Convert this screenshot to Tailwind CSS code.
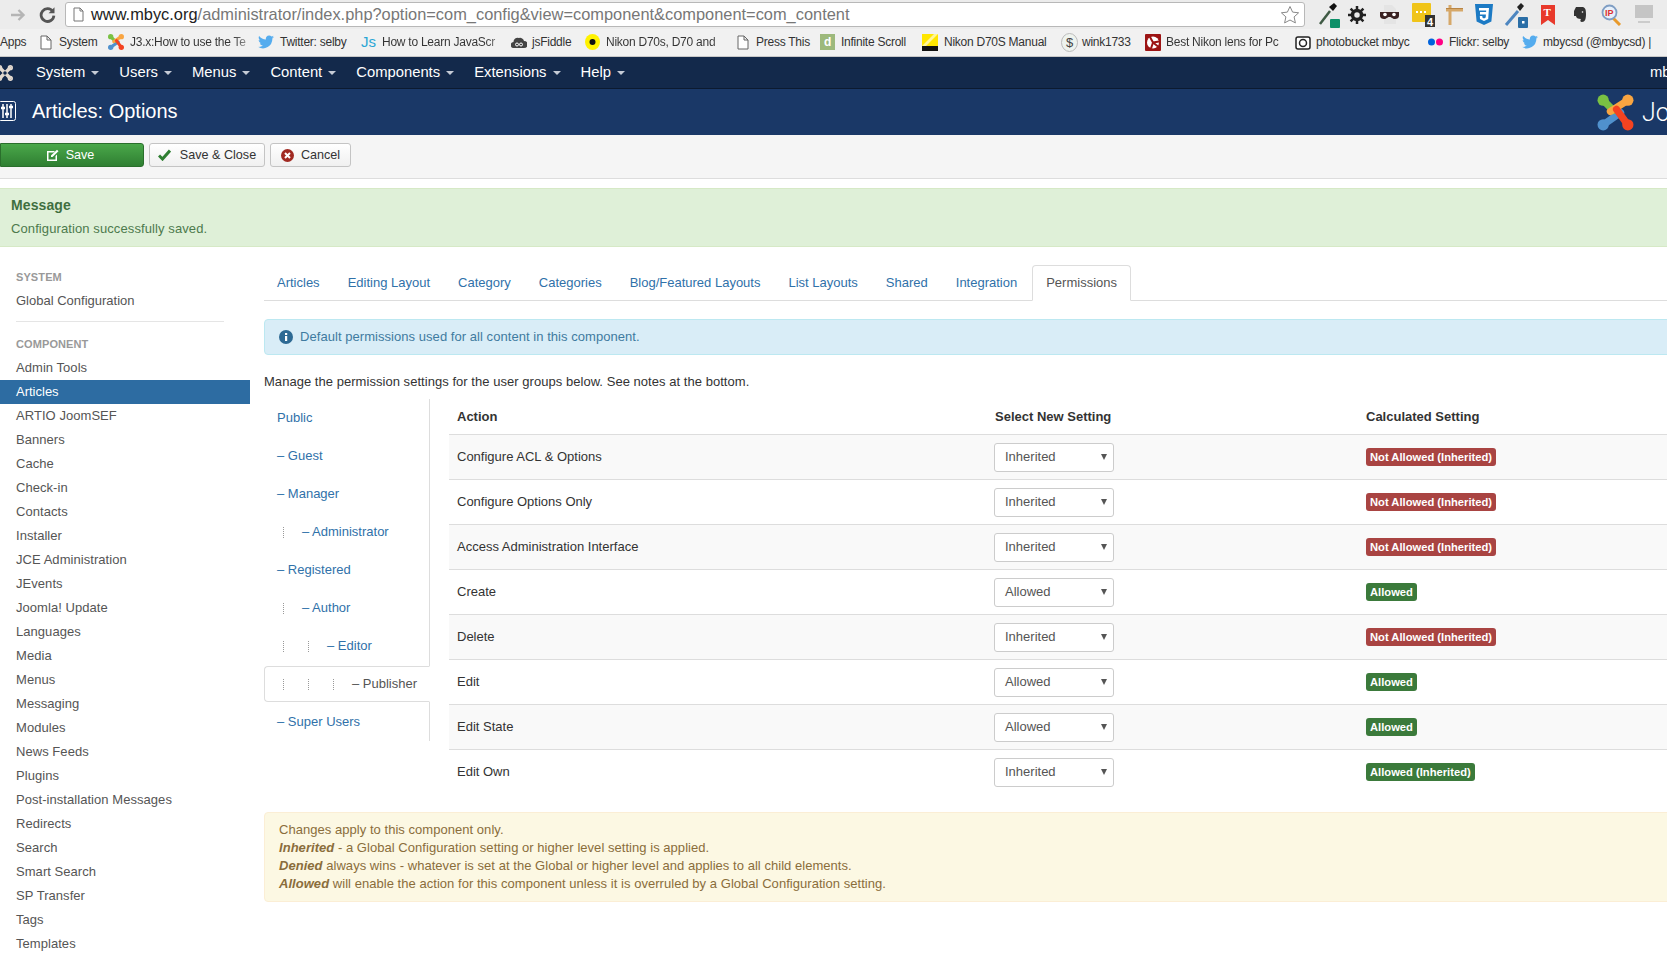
<!DOCTYPE html>
<html lang="en">
<head>
  <meta charset="UTF-8">
  <title>Articles: Options</title>
  <script src="https://cdn.jsdelivr.net/npm/@tailwindcss/browser@4"></script>
</head>
<body class="w-[1667px] h-[960px] overflow-hidden bg-white text-[13px] text-[#333] font-['Liberation_Sans',Arial,sans-serif]">

  <!-- browser toolbar -->
  <div class="h-[29px] flex items-center bg-[#ececec]">
    <svg class="ml-[10px] w-[16px] h-[16px] text-[#b5b5b5]" viewBox="0 0 16 16" fill="none" stroke="currentColor" stroke-width="2.4"><path d="M1 8h12M8.5 3l5 5-5 5"/></svg>
    <svg class="ml-[13px] w-[17px] h-[17px] text-[#555]" viewBox="0 0 16 16" fill="none" stroke="currentColor" stroke-width="2.6"><path d="M13 5.2A6 6 0 1 0 14 9"/><path d="M14.6 1.2v5.6H9z" fill="currentColor" stroke="none"/></svg>
    <div class="ml-[9px] w-[1240px] h-[25px] bg-white border border-[#b8b8b8] rounded-[3px] flex items-center pl-[6px] pr-[4px]">
      <svg class="w-[13px] h-[15px] text-[#777]" viewBox="0 0 13 15" fill="#fff" stroke="currentColor"><path d="M2 1h6l3 3v10H2zM8 1v3h3"/></svg>
      <span class="ml-[6px] text-[16.4px] whitespace-nowrap text-[#222]">www.mbyc.org<span class="text-[#777]">/administrator/index.php?option=com_config&amp;view=component&amp;component=com_content</span></span>
      <svg class="ml-auto w-[20px] h-[20px] text-[#888]" viewBox="0 0 20 20" fill="#fff" stroke="currentColor"><path d="M10 1.5l2.6 5.6 6 .7-4.500 4.100 1.300 6L10 15l-5.400 2.900 1.300-6L1.400 7.800l6-.7z"/></svg>
    </div>
    <svg class="ml-[13px] w-[22px] h-[26px]" viewBox="0 0 22 26"><path d="M2 22L12 9" stroke="#3f5a44" stroke-width="2.500"/><path d="M11 5l5-4 3 3-4 5z" fill="#111"/><rect x="12" y="17" width="10" height="9" rx="1" fill="#0d9068"/></svg>
    <svg class="ml-[8px] w-[18px] h-[18px]" viewBox="0 0 18 18"><circle cx="9" cy="9" r="4.500" fill="none" stroke="#222" stroke-width="3.500"/><path d="M9 0v4M9 14v4M0 9h4M14 9h4M2.600 2.600l3 3M12.400 12.400l3 3M15.400 2.600l-3 3M5.600 12.400l-3 3" stroke="#222" stroke-width="2.500"/></svg>
    <svg class="ml-[14px] w-[19px] h-[22px]" viewBox="0 0 19 22"><path d="M4 1h8l4 4v15H4z" fill="#e4e4e4"/><path d="M0 8h19v4c0 2-2 3-4 3-3 0-3-2-5.500-2S7 15 4 15c-2 0-4-1-4-3z" fill="#3a2222"/><circle cx="5" cy="10.500" r="1.800" fill="#fff"/><circle cx="14" cy="10.500" r="1.800" fill="#fff"/></svg>
    <svg class="ml-[13px] w-[24px] h-[25px]" viewBox="0 0 24 25"><rect width="19" height="19" rx="1" y="1" fill="#f0c419"/><path d="M4 10h2M8 10h2M12 10h2" stroke="#fff" stroke-width="2"/><rect x="13" y="13" width="10" height="12" fill="#333"/><text x="15" y="23.500" font-size="11" font-weight="bold" fill="#fff">4</text></svg>
    <svg class="ml-[9px] w-[18px] h-[21px]" viewBox="0 0 18 21"><path d="M5 1v20M1 6h17" stroke="#d6a869" stroke-width="3"/><path d="M1 4.500h17" stroke="#b98544"/></svg>
    <svg class="ml-[12px] w-[18px] h-[21px]" viewBox="0 0 18 21"><path d="M0 0h18l-1.600 17.500L9 21l-7.400-3.500z" fill="#1c7ac4"/><path d="M4 4h10l-.8 11L9 17l-4-2-.2-3h2.500l.1 1.500L9 14.500l1.700-1 .2-3H5V8h6.100l.1-1.500H4z" fill="#fff"/></svg>
    <svg class="ml-[11px] w-[24px] h-[26px]" viewBox="0 0 24 26"><path d="M2 23L14 9" stroke="#4d86c0" stroke-width="3"/><path d="M13 5l4-4 3 3-4 5z" fill="#222"/><rect x="14" y="15" width="10" height="11" rx="1" fill="#2a6ea6"/><rect x="18" y="19" width="2.500" height="2.500" fill="#fff"/></svg>
    <svg class="ml-[13px] w-[14px] h-[20px]" viewBox="0 0 14 20"><path d="M0 0h14v20l-7-5-7 5z" fill="#e8392b"/><text x="2.500" y="11" font-size="11" font-weight="bold" fill="#fff" font-family="Liberation Serif">T</text></svg>
    <svg class="ml-[18px] w-[14px] h-[17px]" viewBox="0 0 14 17"><path d="M3 1h6c3 0 4 2 4 7 0 5-1 8-4 8-2 0-2-2-1-3-3 0-5-1-5-3H1V5z" fill="#333"/><circle cx="9.500" cy="6" r=".8" fill="#fff"/></svg>
    <svg class="ml-[14px] w-[21px] h-[22px]" viewBox="0 0 21 22"><path d="M12 14l7 7" stroke="#e89a2c" stroke-width="3"/><circle cx="8.500" cy="8.500" r="7" fill="#e8f0fa" stroke="#7f9ec4" stroke-width="1.800"/><text x="4" y="12" font-size="9" font-weight="bold" fill="#d33">IP</text></svg>
    <svg class="ml-[13px] w-[18px] h-[19px]" viewBox="0 0 18 19"><rect width="18" height="13" fill="#c5c5c5"/><path d="M3 17h12" stroke="#ccc" stroke-width="2"/></svg>
  </div>

  <!-- bookmarks bar -->
  <div class="h-[28px] pb-[1px] flex items-center bg-[#f1f1f1] border-b border-[#c8c8c8] text-[12px] text-[#333] whitespace-nowrap overflow-hidden tracking-[-0.25px]">
    <span class="w-[40px] shrink-0">Apps</span>
    <svg class="w-[12px] h-[15px] shrink-0 text-[#666]" viewBox="0 0 12 15" fill="#fff" stroke="currentColor"><path d="M1 1h6l4 4v9H1zM7 1v4h4"/></svg>
    <span class="ml-[7px] w-[49px] shrink-0">System</span>
    <svg class="w-[16px] h-[18px] shrink-0" viewBox="0 0 36 36" fill="none" stroke-width="7" stroke-linecap="round"><path d="M6 30L23 18" stroke="#5091cd"/><path d="M6 6l10 10" stroke="#7ac143"/><path d="M30 6L13 17" stroke="#f9a541"/><path d="M30 30L19 15" stroke="#f44321"/><circle cx="6" cy="6" r="6" fill="#7ac143"/><circle cx="30" cy="6" r="6" fill="#f9a541"/><circle cx="30" cy="30" r="6" fill="#f44321"/><circle cx="6" cy="30" r="6" fill="#5091cd"/></svg>
    <span class="ml-[6px] w-[128px] shrink-0 overflow-hidden text-transparent bg-clip-text bg-gradient-to-r from-[#333] from-80% to-[#f1f1f1]">J3.x:How to use the Te</span>
    <svg class="w-[16px] h-[14px] shrink-0" viewBox="0 0 24 20"><path d="M24 2.500c-.9.400-1.800.7-2.800.8 1-.6 1.800-1.500 2.200-2.700-1 .6-2 1-3.100 1.200A4.900 4.900 0 0 0 11.900 6.200C7.800 6 4.200 4 1.700.9c-1.300 2.200-.7 5.100 1.500 6.600-.8 0-1.600-.2-2.200-.6 0 2.300 1.600 4.400 4 4.900-.7.200-1.500.2-2.200.1.600 2 2.400 3.400 4.600 3.400A9.900 9.900 0 0 1 0 17.300 14 14 0 0 0 21.500 4.900c1-.7 1.800-1.500 2.500-2.400z" fill="#55acee"/></svg>
    <span class="ml-[6px] w-[81px] shrink-0">Twitter: selby</span>
    <span class="w-[15px] shrink-0 text-[15px] text-[#2aa6d5] tracking-normal">Js</span>
    <span class="ml-[6px] w-[129px] shrink-0 overflow-hidden text-transparent bg-clip-text bg-gradient-to-r from-[#333] from-80% to-[#f1f1f1]">How to Learn JavaScr</span>
    <svg class="w-[16px] h-[13px] shrink-0" viewBox="0 0 16 13"><path d="M3 12a3 3 0 0 1-.5-6A4 4 0 0 1 8 2a4 4 0 0 1 5 3 3.500 3.500 0 0 1 0 7z" fill="#444"/><circle cx="6" cy="8.500" r="1.500" fill="none" stroke="#fff"/><circle cx="10" cy="8.500" r="1.500" fill="none" stroke="#fff"/></svg>
    <span class="ml-[5px] w-[53px] shrink-0">jsFiddle</span>
    <svg class="w-[15px] h-[16px] shrink-0" viewBox="0 0 15 16"><ellipse cx="7.500" cy="8" rx="7.500" ry="8" fill="#fff200"/><circle cx="7.500" cy="8" r="3" fill="#111"/></svg>
    <span class="ml-[6px] w-[131px] shrink-0 overflow-hidden text-transparent bg-clip-text bg-gradient-to-r from-[#333] from-80% to-[#f1f1f1]">Nikon D70s, D70 and</span>
    <svg class="w-[12px] h-[15px] shrink-0 text-[#666]" viewBox="0 0 12 15" fill="#fff" stroke="currentColor"><path d="M1 1h6l4 4v9H1zM7 1v4h4"/></svg>
    <span class="ml-[7px] w-[64px] shrink-0">Press This</span>
    <span class="w-[15px] h-[16px] shrink-0 bg-[#9db97c] text-white text-[12px] font-bold text-center leading-[16px]">d</span>
    <span class="ml-[6px] w-[81px] shrink-0">Infinite Scroll</span>
    <svg class="w-[16px] h-[17px] shrink-0" viewBox="0 0 16 17"><rect width="16" height="17" fill="#ffe600"/><path d="M0 12L12 0h4L0 16z" fill="#fff59a"/><rect y="12" width="16" height="5" fill="#111"/></svg>
    <span class="ml-[6px] w-[117px] shrink-0">Nikon D70S Manual</span>
    <svg class="w-[17px] h-[19px] shrink-0" viewBox="0 0 17 19"><ellipse cx="8.500" cy="9.500" rx="8" ry="9" fill="#eef3ee" stroke="#bbb"/><text x="5" y="14" font-size="13" fill="#444">$</text></svg>
    <span class="ml-[4px] w-[63px] shrink-0">wink1733</span>
    <svg class="w-[16px] h-[17px] shrink-0" viewBox="0 0 16 17"><rect width="16" height="17" rx="1" fill="#9c1414"/><circle cx="8" cy="8.500" r="6" fill="#fff"/><path d="M8 8.500L5 3M8 8.500l6-1M8 8.500l-2 6M8 8.500l5 4" stroke="#9c1414" stroke-width="2"/></svg>
    <span class="ml-[5px] w-[129px] shrink-0 overflow-hidden text-transparent bg-clip-text bg-gradient-to-r from-[#333] from-85% to-[#f1f1f1]">Best Nikon lens for Pc</span>
    <svg class="w-[16px] h-[15px] shrink-0" viewBox="0 0 16 15"><rect x="1" y="2" width="14" height="12" rx="2" fill="#fff" stroke="#222" stroke-width="1.500"/><circle cx="8" cy="8" r="3.500" fill="none" stroke="#222" stroke-width="1.500"/></svg>
    <span class="ml-[5px] w-[112px] shrink-0">photobucket mbyc</span>
    <svg class="w-[15px] h-[8px] shrink-0" viewBox="0 0 15 8"><circle cx="3.500" cy="4" r="3.500" fill="#0063dc"/><circle cx="11.500" cy="4" r="3.500" fill="#ff0084"/></svg>
    <span class="ml-[6px] w-[73px] shrink-0">Flickr: selby</span>
    <svg class="w-[16px] h-[14px] shrink-0" viewBox="0 0 24 20"><path d="M24 2.500c-.9.400-1.800.7-2.800.8 1-.6 1.800-1.500 2.200-2.700-1 .6-2 1-3.100 1.200A4.900 4.900 0 0 0 11.900 6.200C7.800 6 4.200 4 1.700.9c-1.300 2.200-.7 5.100 1.500 6.600-.8 0-1.600-.2-2.200-.6 0 2.300 1.600 4.400 4 4.900-.7.200-1.500.2-2.200.1.600 2 2.400 3.400 4.600 3.400A9.900 9.900 0 0 1 0 17.300 14 14 0 0 0 21.500 4.900c1-.7 1.800-1.500 2.500-2.400z" fill="#55acee"/></svg>
    <span class="ml-[5px]">mbycsd (@mbycsd) |</span>
  </div>

  <!-- admin menu -->
  <div class="h-[32px] flex items-center bg-[#13294b] border-b border-[#0c1a30] text-white text-[14.8px] whitespace-nowrap">
    <svg class="w-[16px] h-[18px] -ml-[3px] mr-[23px]" viewBox="0 0 36 36" fill="#e3d9cf" stroke="#e3d9cf" stroke-width="8"><path d="M6 6l24 24M30 6L6 30" fill="none"/><circle cx="18" cy="18" r="2" stroke-width="4" stroke="#13294b"/><circle cx="6" cy="6" r="2"/><circle cx="30" cy="6" r="2"/><circle cx="30" cy="30" r="2"/><circle cx="6" cy="30" r="2"/></svg>
    <div id="menu" class="flex"></div>
    <span class="ml-auto w-[17px] overflow-hidden">mb</span>
  </div>

  <!-- title bar -->
  <div class="h-[46px] flex items-center bg-[#1a3867] text-white overflow-hidden">
    <svg class="w-[18px] h-[20px] -ml-[2px] mr-[16px] -mt-[2px]" viewBox="0 0 18 20" fill="none" stroke="#fff"><rect x=".5" y=".5" width="17" height="19" rx="2"/><path d="M5 3v14M9 3v14M13 3v14" stroke-width="1.500"/><path d="M3 7h4M7 13h4M11 6h4" stroke-width="2.500"/></svg>
    <h1 class="text-[20px] leading-none -mt-[3px]">Articles: Options</h1>
    <svg class="ml-auto w-[37px] h-[37px]" viewBox="0 0 36 36" fill="none" stroke-width="7" stroke-linecap="round"><path d="M6 30L23 18" stroke="#5091cd"/><path d="M6 6l10 10" stroke="#7ac143"/><path d="M30 6L13 17" stroke="#f9a541"/><path d="M30 30L19 15" stroke="#f44321"/><circle cx="6" cy="6" r="5.500" fill="#7ac143"/><circle cx="30" cy="6" r="5.500" fill="#f9a541"/><circle cx="30" cy="30" r="5.500" fill="#f44321"/><circle cx="6" cy="30" r="5.500" fill="#5091cd"/></svg>
    <span class="ml-[8px] w-[25px] overflow-hidden text-[25px] font-['Roboto',sans-serif] font-light leading-none">Jo</span>
  </div>

  <!-- action buttons -->
  <div class="h-[44px] pt-[8px] flex items-start bg-[#f5f5f5] border-b border-[#ddd] text-[12.6px]">
    <button class="w-[144px] h-[24px] flex items-center justify-center gap-[7px] rounded-r-[3px] bg-gradient-to-b from-[#4aa84a] to-[#2f7f32] border border-[#2a6f2c] text-white pr-[4px]">
      <svg class="w-[13px] h-[13px]" viewBox="0 0 13 13"><path d="M1 2h8l-1.500 1.500H2.500v7h7V7L11 5.500V12H1z" fill="#fff"/><path d="M5 6.500L11 .7l1.500 1.500-6 5.800H5z" fill="#fff"/></svg>Save
    </button>
    <button class="ml-[5px] w-[116px] h-[24px] flex items-center justify-center gap-[9px] rounded-[3px] bg-gradient-to-b from-white to-[#f0f0f0] border border-[#c4c4c4] text-[#333]">
      <svg class="w-[13px] h-[12px]" viewBox="0 0 13 12" fill="none" stroke="#2f7f32" stroke-width="3"><path d="M1 6.500l3.500 3.500L12 1.500"/></svg>Save &amp; Close
    </button>
    <button class="ml-[5px] w-[81px] h-[24px] flex items-center justify-center gap-[7px] rounded-[3px] bg-gradient-to-b from-white to-[#f0f0f0] border border-[#c4c4c4] text-[#333]">
      <svg class="w-[13px] h-[13px]" viewBox="0 0 13 13"><circle cx="6.500" cy="6.500" r="6.500" fill="#a12a22"/><path d="M4 4l5 5M9 4l-5 5" stroke="#fff" stroke-width="2"/></svg>Cancel
    </button>
  </div>

  <!-- system message -->
  <div class="mt-[9px] h-[59px] bg-[#dff0d8] border-y border-[#d6e9c6] text-[#4d7a4d] pl-[11px] tracking-[0.1px]">
    <h4 class="mt-[6px] text-[14px] font-bold leading-[20px] text-[#3f6f3f]">Message</h4>
    <p class="mt-[4px] leading-[20px]">Configuration successfully saved.</p>
  </div>

  <div class="flex">
    <!-- sidebar -->
    <aside class="w-[250px] shrink-0 pt-[19px]">
      <div class="h-[22px] pl-[16px] text-[11px] font-bold text-[#999] leading-[22px] tracking-[0.1px]">SYSTEM</div>
      <div class="h-[24px] pl-[16px] leading-[26px] text-[#555]">Global Configuration</div>
      <div class="mt-[9px] ml-[16px] w-[208px] border-t border-[#e5e5e5]"></div>
      <div class="mt-[10px] h-[24px] pl-[16px] text-[11px] font-bold text-[#999] leading-[24px] tracking-[0.1px]">COMPONENT</div>
      <ul id="sidebar"></ul>
    </aside>

    <!-- main -->
    <main class="ml-[14px] w-[1500px] shrink-0 pt-[18px]">
      <div id="tabs" class="flex h-[36px] border-b border-[#ddd]"></div>

      <div class="mt-[18px] h-[36px] flex items-center bg-[#d9edf7] border border-[#bce8f1] rounded-l-[4px] text-[#3f7ba0] pl-[14px] tracking-[0.05px]">
        <svg class="w-[14px] h-[14px] mr-[7px]" viewBox="0 0 14 14"><circle cx="7" cy="7" r="7" fill="#2d6a94"/><rect x="6" y="6" width="2.200" height="5" fill="#fff"/><rect x="6" y="3" width="2.200" height="2" fill="#fff"/></svg>
        Default permissions used for all content in this component.
      </div>

      <p class="mt-[18px] leading-[18px] tracking-[0.04px]">Manage the permission settings for the user groups below. See notes at the bottom.</p>

      <div class="mt-[8px] flex items-start">
        <ul id="groups" class="w-[166px] shrink-0 border-r border-[#ddd]"></ul>
        <div class="ml-[19px] flex-1">
          <div class="grid grid-cols-[538px_371px_1fr] h-[36px] items-center border-b border-[#ddd] font-bold text-[#333]">
            <div class="pl-[8px]">Action</div><div class="pl-[8px]">Select New Setting</div><div class="pl-[8px]">Calculated Setting</div>
          </div>
          <div id="rows"></div>
        </div>
      </div>

      <div class="mt-[17px] h-[90px] pt-[8px] pl-[14px] bg-[#fcf8e3] border border-[#fbeed5] rounded-l-[4px] text-[#8a6d3b] leading-[18px] tracking-[0.04px]">
        <p>Changes apply to this component only.</p>
        <p><strong class="italic">Inherited</strong> - a Global Configuration setting or higher level setting is applied.</p>
        <p><strong class="italic">Denied</strong> always wins - whatever is set at the Global or higher level and applies to all child elements.</p>
        <p><strong class="italic">Allowed</strong> will enable the action for this component unless it is overruled by a Global Configuration setting.</p>
      </div>
    </main>
  </div>

  <script>
    const menu = ['System', 'Users', 'Menus', 'Content', 'Components', 'Extensions', 'Help'];
    document.getElementById('menu').innerHTML = menu.map(m => `
      <span class="flex items-center gap-[6px] mr-[20px]">${m}<i class="w-0 h-0 border-x-[4px] border-x-transparent border-t-[4px] border-t-[#c5cbd6]"></i></span>`).join('');

    const items = ['Admin Tools', 'Articles', 'ARTIO JoomSEF', 'Banners', 'Cache', 'Check-in', 'Contacts', 'Installer', 'JCE Administration', 'JEvents', 'Joomla! Update', 'Languages', 'Media', 'Menus', 'Messaging', 'Modules', 'News Feeds', 'Plugins', 'Post-installation Messages', 'Redirects', 'Search', 'Smart Search', 'SP Transfer', 'Tags', 'Templates'];
    document.getElementById('sidebar').innerHTML = items.map(i => i === 'Articles'
      ? `<li class="h-[24px] pl-[16px] leading-[24px] bg-[#2d6ca2] text-white">${i}</li>`
      : `<li class="h-[24px] pl-[16px] leading-[24px] text-[#555] tracking-[0.05px]">${i}</li>`).join('');

    const tabs = ['Articles', 'Editing Layout', 'Category', 'Categories', 'Blog/Featured Layouts', 'List Layouts', 'Shared', 'Integration'];
    document.getElementById('tabs').innerHTML = tabs.map(t => `
      <span class="px-[13px] mr-[2px] leading-[36px] text-[#3071a9]">${t}</span>`).join('') + `
      <span class="px-[13px] h-[36px] leading-[34px] bg-white border border-[#ddd] border-b-white rounded-t-[4px] text-[#555]">Permissions</span>`;

    const groups = [['Public', 0, ''], ['Guest', 0, '– '], ['Manager', 0, '– '], ['Administrator', 1, '– '], ['Registered', 0, '– '], ['Author', 1, '– '], ['Editor', 2, '– '], ['Publisher', 3, '– '], ['Super Users', 0, '– ']];
    document.getElementById('groups').innerHTML = groups.map(([name, depth, dash]) => {
      const guides = '<i class="w-[25px] pl-[6px] shrink-0"><b class="block h-[11px] border-l border-dotted border-[#999]"></b></i>'.repeat(depth);
      return name === 'Publisher'
        ? `<li class="h-[36px] my-px -mr-px flex items-center pl-[12px] bg-white border border-r-white border-[#ddd] rounded-l-[4px] text-[#555]">${guides}<span>${dash}${name}</span></li>`
        : `<li class="h-[38px] flex items-center pl-[13px] text-[#3071a9]">${guides}<span>${dash}${name}</span></li>`;
    }).join('');

    const NOT = 'Not Allowed (Inherited)', OK = 'Allowed', OKI = 'Allowed (Inherited)';
    const rows = [['Configure ACL & Options', 'Inherited', NOT], ['Configure Options Only', 'Inherited', NOT], ['Access Administration Interface', 'Inherited', NOT], ['Create', 'Allowed', OK], ['Delete', 'Inherited', NOT], ['Edit', 'Allowed', OK], ['Edit State', 'Allowed', OK], ['Edit Own', 'Inherited', OKI]];
    document.getElementById('rows').innerHTML = rows.map(([action, setting, calc], n) => `
      <div class="grid grid-cols-[538px_371px_1fr] h-[45px] items-center border-b ${n < 7 ? 'border-[#ddd]' : 'border-transparent'} ${n % 2 ? 'bg-white' : 'bg-[#f9f9f9]'}">
        <div class="pl-[8px] text-[#333]">${action.replace('&', '&amp;')}</div>
        <div class="pl-[7px]">
          <div class="w-[120px] h-[29px] flex items-center justify-between pl-[10px] pr-[6px] bg-white border border-[#ccc] rounded-[3px] text-[#555]">${setting}<i class="w-0 h-0 border-x-[3.5px] border-x-transparent border-t-[6px] border-t-[#555]"></i></div>
        </div>
        <div class="pl-[8px]">
          <span class="inline-block h-[18px] px-[4px] rounded-[3px] text-white font-bold text-[11.2px] leading-[18px] ${calc === NOT ? 'bg-[#a94442]' : 'bg-[#3b7a3b]'}">${calc}</span>
        </div>
      </div>`).join('');
  </script>
</body>
</html>
